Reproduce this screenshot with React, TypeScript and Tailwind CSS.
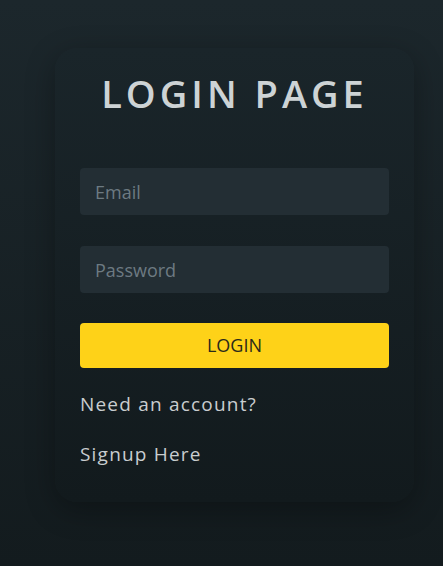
import React from 'react';

const App: React.FC = () => {
  return (
    <div
      className="w-[443px] h-[566px] overflow-hidden bg-gradient-to-b from-[#1c272c] to-[#131b1e] pt-[48px]"
      style={{ fontFamily: '"Open Sans", "Noto Sans", sans-serif' }}
    >
      <div className="ml-[55px] w-[359px] h-[454px] rounded-[22px] bg-gradient-to-b from-[#1a252a] to-[#121a1d] shadow-[0_8px_30px_rgba(0,0,0,0.3)] px-[25px] pt-[19px]">
        <h1 className="text-center text-[38px] font-semibold tracking-[4px] text-[#cdd3d5] leading-[52px]">
          LOGIN PAGE
        </h1>

        <form className="mt-[49px] flex flex-col" onSubmit={(e) => e.preventDefault()}>
          <input
            type="email"
            placeholder="Email"
            className="h-[47px] w-full rounded-[4px] bg-[#232e34] px-[15px] text-[18px] text-[#c8ced0] placeholder:text-[#6d7a82] outline-none"
          />
          <input
            type="password"
            placeholder="Password"
            className="mt-[31px] h-[47px] w-full rounded-[4px] bg-[#232e34] px-[15px] text-[18px] text-[#c8ced0] placeholder:text-[#6d7a82] outline-none"
          />
          <button
            type="submit"
            className="mt-[30px] h-[45px] w-full rounded-[4px] bg-[#fed218] text-[18px] text-[#2a2a1a]"
          >
            LOGIN
          </button>
        </form>

        <p className="mt-[22px] text-[19px] tracking-[1.2px] text-[#c9cdcf]">Need an account?</p>
        <p className="mt-[21px] text-[19px] tracking-[1.2px] text-[#c9cdcf]">Signup Here</p>
      </div>
    </div>
  );
};

export default App;
